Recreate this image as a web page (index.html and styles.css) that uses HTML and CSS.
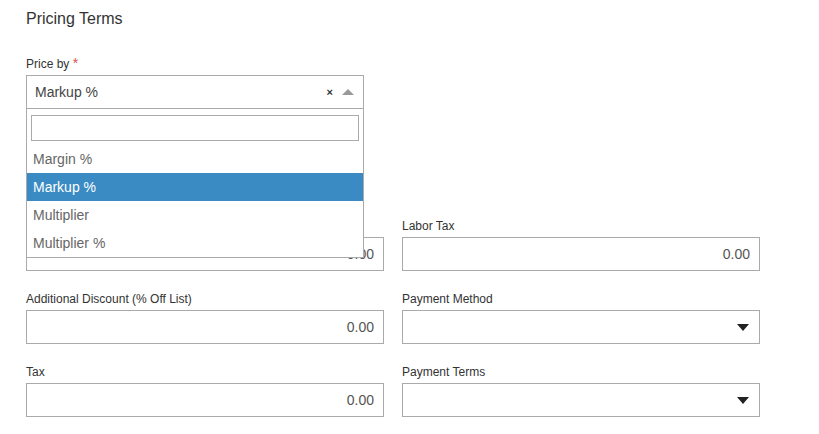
FILE: index.html
```html
<!DOCTYPE html>
<html lang="en">
<head>
  <meta charset="UTF-8" />
  <meta name="viewport" content="width=device-width, initial-scale=1.0"/>
  <title>Pricing Terms</title>
  <link rel="stylesheet" href="styles.css">
</head>
<body>
  <div class="page">
    <h2 class="section-title">Pricing Terms</h2>

    <div class="field price-by">
      <label class="field-label">Price by <span class="required">*</span></label>
      <div class="select-box open">
        <span class="select-value">Markup %</span>
        <span class="select-clear">×</span>
        <span class="caret caret-up"></span>
        <div class="dropdown">
          <div class="dropdown-search"><input type="text" class="search-input"></div>
          <ul class="dropdown-options">
            <li>Margin %</li>
            <li class="active">Markup %</li>
            <li>Multiplier</li>
            <li>Multiplier %</li>
          </ul>
        </div>
      </div>
    </div>

    <div class="form-grid">
      <div class="field">
        <label class="field-label">&nbsp;</label>
        <input class="text-input" type="text" value="0.00">
      </div>
      <div class="field">
        <label class="field-label">Labor Tax</label>
        <input class="text-input" type="text" value="0.00">
      </div>
      <div class="field">
        <label class="field-label">Additional Discount (% Off List)</label>
        <input class="text-input" type="text" value="0.00">
      </div>
      <div class="field">
        <label class="field-label">Payment Method</label>
        <div class="select-box wide"><span class="caret caret-down"></span></div>
      </div>
      <div class="field">
        <label class="field-label">Tax</label>
        <input class="text-input" type="text" value="0.00">
      </div>
      <div class="field">
        <label class="field-label">Payment Terms</label>
        <div class="select-box wide"><span class="caret caret-down"></span></div>
      </div>
    </div>
  </div>
</body>
</html>
```

FILE: styles.css
```css
body {
  margin: 0;
  padding: 0;
  font-family: "Liberation Sans", Arial, sans-serif;
  color: #333;
  background: #fff;
}

.page {
  padding: 9px 0 0 26px;
}

.section-title {
  margin: 0;
  font-size: 16px;
  line-height: 20px;
  font-weight: normal;
  color: #333;
}

.field-label {
  display: block;
  font-size: 12px;
  line-height: 15px;
  margin-bottom: 3px;
  color: #333;
}

.required {
  color: #d9534f;
  font-size: 14px;
}

.price-by {
  margin-top: 27px;
  width: 338px;
  margin-bottom: 110px;
}

.select-box {
  position: relative;
  height: 34px;
  box-sizing: border-box;
  border: 1px solid #aaa;
  background: #fff;
  display: flex;
  align-items: center;
  padding: 0 8px;
}

.select-value {
  flex-grow: 1;
  font-size: 14px;
  color: #444;
}

.select-clear {
  font-size: 11px;
  font-weight: bold;
  color: #333;
  margin-right: 9px;
}

.caret {
  width: 0;
  height: 0;
  border-left: 6px solid transparent;
  border-right: 6px solid transparent;
}

.caret-up {
  border-bottom: 6px solid #999;
  margin-right: 1px;
}

.select-box.wide {
  justify-content: flex-end;
  padding-right: 10px;
}

.caret-down {
  border-top: 7px solid #222;
}

.dropdown {
  position: absolute;
  top: 33px;
  left: -1px;
  right: -1px;
  z-index: 5;
  background: #fff;
  border: 1px solid #aaa;
  border-top: none;
}

.dropdown-search {
  padding: 6px 4px 4px;
}

.search-input {
  display: block;
  width: 100%;
  height: 26px;
  box-sizing: border-box;
  border: 1px solid #aaa;
  margin: 0;
}

.dropdown-options {
  list-style: none;
  margin: 0;
  padding: 0;
}

.dropdown-options li {
  height: 28px;
  line-height: 28px;
  padding: 0 6px;
  font-size: 14px;
  color: #666;
}

.dropdown-options li.active {
  background: #3a8bc4;
  color: #fff;
}

.form-grid {
  display: grid;
  grid-template-columns: 358px 358px;
  column-gap: 18px;
  row-gap: 21px;
}

.text-input {
  display: block;
  width: 100%;
  height: 34px;
  box-sizing: border-box;
  margin: 0;
  border: 1px solid #aaa;
  padding: 0 9px;
  font-family: "Liberation Sans", Arial, sans-serif;
  font-size: 14px;
  color: #555;
  text-align: right;
}
```
